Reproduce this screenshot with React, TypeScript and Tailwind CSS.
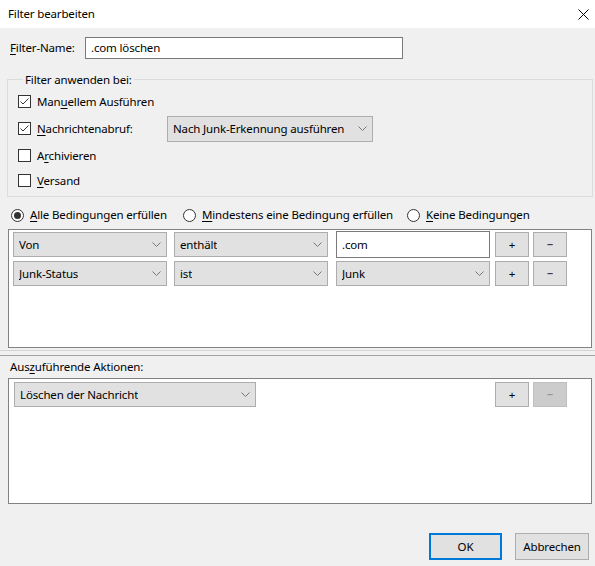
import React from 'react';

// Small accelerator-key underline, like a native dialog label
const Key: React.FC<{ children: React.ReactNode }> = ({ children }) => (
  <span className="underline underline-offset-2 decoration-1">{children}</span>
);

const Chevron: React.FC = () => (
  <svg width="9" height="6" viewBox="0 0 9 6" className="shrink-0">
    <path d="M0.5 0.5 L4.5 4.5 L8.5 0.5" fill="none" stroke="#777" strokeWidth="1" />
  </svg>
);

const Select: React.FC<{ label: string; className: string }> = ({ label, className }) => (
  <div
    className={`flex items-center justify-between bg-[#e1e1e1] border border-[#adadad] pl-[5px] pr-[5px] shrink-0 ${className}`}
  >
    <span className="truncate">{label}</span>
    <Chevron />
  </div>
);

const CheckBox: React.FC<{ checked?: boolean; children: React.ReactNode }> = ({ checked, children }) => (
  <div className="flex items-center gap-[6px]">
    <div className="w-[13px] h-[13px] border border-[#333333] bg-white flex items-center justify-center">
      {checked && (
        <svg width="11" height="11" viewBox="0 0 11 11">
          <path d="M1.5 5.5 L4 8 L9.5 2.5" fill="none" stroke="#333" strokeWidth="1" />
        </svg>
      )}
    </div>
    <span>{children}</span>
  </div>
);

const Radio: React.FC<{ selected?: boolean; className?: string; children: React.ReactNode }> = ({
  selected,
  className,
  children,
}) => (
  <div className={`flex items-center gap-[6px] ${className ?? ''}`}>
    <div className="w-[13px] h-[13px] rounded-full border border-[#333333] bg-white flex items-center justify-center">
      {selected && <div className="w-[7px] h-[7px] rounded-full bg-[#333333]" />}
    </div>
    <span>{children}</span>
  </div>
);

const SmallButton: React.FC<{ label: string; disabled?: boolean; className?: string }> = ({
  label,
  disabled,
  className,
}) => (
  <div
    className={`w-[34px] h-[25px] flex items-center justify-center border shrink-0 ${
      disabled ? 'bg-[#cccccc] border-[#bfbfbf] text-[#838383]' : 'bg-[#e1e1e1] border-[#adadad] text-black'
    } ${className ?? ''}`}
  >
    {label}
  </div>
);

export default function App() {
  return (
    <div
      className="w-[595px] h-[566px] bg-[#f0f0f0] text-[11.5px] tracking-[-0.15px] text-black flex flex-col overflow-hidden"
      style={{ fontFamily: '"Noto Sans", "Open Sans", sans-serif' }}
    >
      {/* Title bar */}
      <div className="h-[28px] bg-white flex items-center justify-between pl-[8px] pr-[5px] shrink-0">
        <span>Filter bearbeiten</span>
        <svg width="11" height="11" viewBox="0 0 11 11" className="mr-[1px]">
          <path d="M0.5 0.5 L10.5 10.5 M10.5 0.5 L0.5 10.5" stroke="#000" strokeWidth="1" />
        </svg>
      </div>

      {/* Filter name */}
      <div className="flex items-center mt-[9px] pl-[10px]">
        <span className="w-[75px]">
          <Key>F</Key>ilter-Name:
        </span>
        <div className="w-[318px] h-[22px] bg-white border border-[#7a7a7a] flex items-center px-[5px]">
          .com löschen
        </div>
      </div>

      {/* Apply-on group */}
      <fieldset className="ml-[7px] mr-[2px] mt-[15px] border border-[#dcdcdc] h-[123px] flex flex-col pl-[10px] pt-[5px]">
        <legend className="ml-[5px] px-[2px] leading-none">Filter anwenden bei:</legend>
        <div className="h-[22px] flex items-center">
          <CheckBox checked>
            Man<Key>u</Key>ellem Ausführen
          </CheckBox>
        </div>
        <div className="h-[32px] flex items-center">
          <div className="w-[149px]">
            <CheckBox checked>
              <Key>N</Key>achrichtenabruf:
            </CheckBox>
          </div>
          <Select label="Nach Junk-Erkennung ausführen" className="w-[206px] h-[26px]" />
        </div>
        <div className="h-[22px] flex items-center">
          <CheckBox>
            A<Key>r</Key>chivieren
          </CheckBox>
        </div>
        <div className="h-[28px] flex items-center">
          <CheckBox>
            <Key>V</Key>ersand
          </CheckBox>
        </div>
      </fieldset>

      {/* Match mode */}
      <div className="flex items-center h-[32px] pt-[4px] pl-[11px]">
        <Radio selected className="w-[172px]">
          <Key>A</Key>lle Bedingungen erfüllen
        </Radio>
        <Radio className="w-[224px]">
          <Key>M</Key>indestens eine Bedingung erfüllen
        </Radio>
        <Radio>
          <Key>K</Key>eine Bedingungen
        </Radio>
      </div>

      {/* Conditions list */}
      <div className="ml-[8px] mr-[3px] h-[119px] bg-white border border-[#828282] flex flex-col gap-[3px] pt-[1px] pl-[4px]">
        <div className="flex items-center">
          <Select label="Von" className="w-[154px] h-[25px]" />
          <Select label="enthält" className="w-[154px] h-[25px] ml-[7px]" />
          <div className="w-[154px] h-[27px] ml-[8px] bg-white border border-[#7a7a7a] flex items-center px-[5px] shrink-0">
            .com
          </div>
          <SmallButton label="+" className="ml-[5px]" />
          <SmallButton label="−" className="ml-[4px]" />
        </div>
        <div className="flex items-center">
          <Select label="Junk-Status" className="w-[154px] h-[25px]" />
          <Select label="ist" className="w-[154px] h-[25px] ml-[7px]" />
          <Select label="Junk" className="w-[154px] h-[25px] ml-[8px]" />
          <SmallButton label="+" className="ml-[5px]" />
          <SmallButton label="−" className="ml-[4px]" />
        </div>
      </div>

      {/* Splitter */}
      <div className="mt-[2px] h-[6px] border-t border-[#d5d5d5] border-b border-b-[#a0a0a0]" />

      {/* Actions */}
      <div className="pl-[10px] h-[22px] flex items-center">
        Aus<Key>z</Key>uführende Aktionen:
      </div>
      <div className="ml-[8px] mr-[3px] h-[126px] bg-white border border-[#828282] flex items-start pt-[3px] pl-[5px]">
        <Select label="Löschen der Nachricht" className="w-[242px] h-[25px]" />
        <SmallButton label="+" className="ml-[239px]" />
        <SmallButton label="−" disabled className="ml-[4px]" />
      </div>

      {/* Dialog buttons */}
      <div className="flex justify-end gap-[13px] mt-[29px] pr-[6px]">
        <div className="w-[73px] h-[27px] bg-[#e1e1e1] border-2 border-[#0078d7] flex items-center justify-center">OK</div>
        <div className="w-[74px] h-[27px] bg-[#e1e1e1] border border-[#adadad] flex items-center justify-center">
          Abbrechen
        </div>
      </div>
    </div>
  );
}
